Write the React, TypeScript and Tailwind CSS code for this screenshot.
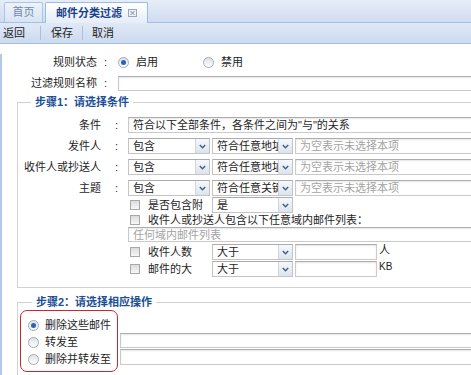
import React from "react";

function Chevron() {
  return (
    <svg width="7" height="5" viewBox="0 0 7 5">
      <path d="M0.8 1 L3.5 3.8 L6.2 1" fill="none" stroke="#3e5f8f" strokeWidth="1.4" />
    </svg>
  );
}

function CloseIcon() {
  return (
    <svg width="9" height="8" viewBox="0 0 9 8">
      <rect x="0.5" y="0.5" width="8" height="7" fill="#eef1f6" stroke="#9aa6ba" />
      <path d="M2.5 2 L6.5 6 M6.5 2 L2.5 6" stroke="#7c89a0" strokeWidth="1" />
    </svg>
  );
}

function Radio({ checked }: { checked?: boolean }) {
  return (
    <span className="w-[11px] h-[11px] shrink-0 rounded-full border border-[#a3acb8] bg-gradient-to-b from-[#dde2e8] to-white flex items-center justify-center">
      {checked && <span className="w-[5px] h-[5px] rounded-full bg-[#2a62b8]" />}
    </span>
  );
}

function Check() {
  return (
    <span className="w-[10px] h-[10px] shrink-0 border border-[#a9a9a9] bg-gradient-to-b from-[#dcdcdc] to-[#f7f7f7]" />
  );
}

function Select({ value, className }: { value: string; className: string }) {
  return (
    <div className={`flex h-full shrink-0 border border-[#c4c4c4] border-t-[#ababab] bg-white ${className}`}>
      <div className="flex-1 min-w-0 overflow-hidden whitespace-nowrap pl-[4px] leading-[14px]">{value}</div>
      <div className="w-[14px] shrink-0 border-l border-[#cfd6de] bg-gradient-to-b from-[#f6f8fb] to-[#dde4ec] flex items-center justify-center">
        <Chevron />
      </div>
    </div>
  );
}

function Box({ children, className = "" }: { children?: React.ReactNode; className?: string }) {
  return (
    <div
      className={`h-full border border-[#cacaca] border-t-[#adadad] bg-white shadow-[inset_0_1px_2px_rgba(0,0,0,0.10)] pl-[4px] leading-[14px] overflow-hidden whitespace-nowrap ${className}`}
    >
      {children}
    </div>
  );
}

function FLabel({ text }: { text: string }) {
  return (
    <>
      <div className="w-[83px] shrink-0 text-right whitespace-nowrap">{text}</div>
      <div className="w-[27px] shrink-0 pl-[14px]">:</div>
    </>
  );
}

function CondRow({ label, mid }: { label: string; mid: string }) {
  return (
    <div className="flex items-center h-[16px]">
      <FLabel text={label} />
      <Select value="包含" className="w-[82px]" />
      <Select value={mid} className="w-[81px] ml-[2px]" />
      <Box className="flex-1 ml-[2px] text-[#a3a3a3]">为空表示未选择本项</Box>
    </div>
  );
}

export default function App() {
  return (
    <div className="w-[471px] h-[375px] overflow-hidden bg-white text-[11px] text-[#1e1e1e] font-['Liberation_Sans','Noto_Sans_CJK_SC',sans-serif]">
      {/* tab strip */}
      <div className="h-[23px] flex items-end gap-[2px] pl-[4px] bg-gradient-to-b from-[#e6edf8] to-[#cfdcf0] border-b border-[#a3bfe6]">
        <div className="h-[20px] w-[39px] flex items-center justify-center border border-b-0 border-[#adc4e4] rounded-t-[2px] bg-gradient-to-b from-[#eef3fa] to-[#d8e3f3] text-[#7089b0]">
          首页
        </div>
        <div className="h-[21px] w-[103px] flex items-center pl-[10px] gap-[6px] border border-b-0 border-[#99bbe8] rounded-t-[2px] bg-gradient-to-b from-white to-[#e6edf8] font-bold text-[#15428b] -mb-px">
          邮件分类过滤
          <CloseIcon />
        </div>
      </div>

      {/* toolbar */}
      <div className="h-[21px] flex items-center bg-gradient-to-b from-[#e1e9f6] to-[#cbdaef] border-b border-[#a3bfe6] text-[#222]">
        <span className="pl-[3px]">返回</span>
        <span className="ml-[15px] w-px h-[14px] bg-[#a9bfdc]" />
        <span className="ml-[10px]">保存</span>
        <span className="ml-[9px] w-px h-[14px] bg-[#a9bfdc]" />
        <span className="ml-[9px]">取消</span>
      </div>

      {/* content */}
      <div className="w-[640px] h-[331px] border-l-2 border-[#b3c9e8]">
        <div className="flex items-center h-[16px] mt-[10px]">
          <div className="w-[95px] shrink-0 text-right">规则状态</div>
          <div className="w-[21px] shrink-0 pl-[7px]">:</div>
          <div className="w-[85px] flex items-center gap-[7px]">
            <Radio checked />
            <span>启用</span>
          </div>
          <div className="flex items-center gap-[7px]">
            <Radio />
            <span>禁用</span>
          </div>
        </div>

        <div className="flex items-center h-[15px] mt-[6px]">
          <div className="w-[95px] shrink-0 text-right">过滤规则名称</div>
          <div className="w-[21px] shrink-0 pl-[7px]">:</div>
          <Box className="flex-1" />
        </div>

        {/* step 1 */}
        <fieldset className="ml-[15px] mt-[3px] border border-[#d2d2d2] px-0 pt-[7px] pb-[10px]">
          <legend className="ml-[13px] px-[4px] leading-[16px] font-bold text-[#1b4f95]">步骤1：请选择条件</legend>
          <div className="flex flex-col gap-[5px]">
            <div className="flex items-center h-[16px]">
              <FLabel text="条件" />
              <Box className="flex-1">符合以下全部条件，各条件之间为"与"的关系</Box>
            </div>
            <CondRow label="发件人" mid="符合任意地址" />
            <CondRow label="收件人或抄送人" mid="符合任意地址" />
            <CondRow label="主题" mid="符合任意关键字" />
          </div>

          <div className="flex items-center h-[16px] mt-[1px]">
            <div className="w-[110px] shrink-0" />
            <div className="w-[84px] shrink-0 flex items-center gap-[8px] pl-[2px]">
              <Check />
              <span>是否包含附</span>
            </div>
            <Select value="是" className="w-[81px]" />
          </div>

          <div className="flex items-center h-[14px]">
            <div className="w-[110px] shrink-0" />
            <div className="flex items-center gap-[8px] pl-[2px]">
              <Check />
              <span>收件人或抄送人包含以下任意域内邮件列表：</span>
            </div>
          </div>

          <div className="flex items-center h-[15px]">
            <div className="w-[110px] shrink-0" />
            <Box className="flex-1 text-[#a3a3a3] pl-[2px]">任何域内邮件列表</Box>
          </div>

          <div className="flex items-center h-[16px] mt-[2px]">
            <div className="w-[110px] shrink-0" />
            <div className="w-[84px] shrink-0 flex items-center gap-[8px] pl-[2px]">
              <Check />
              <span>收件人数</span>
            </div>
            <Select value="大于" className="w-[81px]" />
            <Box className="w-[82px] ml-[2px]" />
            <span className="ml-[2px] self-start leading-[12px]">人</span>
          </div>

          <div className="flex items-center h-[16px] mt-[1px]">
            <div className="w-[110px] shrink-0" />
            <div className="w-[84px] shrink-0 flex items-center gap-[8px] pl-[2px]">
              <Check />
              <span>邮件的大</span>
            </div>
            <Select value="大于" className="w-[81px]" />
            <Box className="w-[82px] ml-[2px]" />
            <span className="ml-[2px] self-start leading-[12px] text-[10px]">KB</span>
          </div>
        </fieldset>

        {/* step 2 */}
        <fieldset className="ml-[15px] mt-[6px] border border-[#d2d2d2] px-0 pt-0 pb-[10px]">
          <legend className="ml-[14px] px-[4px] leading-[16px] font-bold text-[#1b4f95]">步骤2：请选择相应操作</legend>
          <div className="flex">
            <div className="ml-[2px] w-[98px] shrink-0 rounded-[7px] border-[1.5px] border-[#c9262f] pl-[7px] pt-[6px] pb-[4px] flex flex-col gap-[1px]">
              <div className="flex items-center gap-[6px] h-[16px]">
                <Radio checked />
                <span>删除这些邮件</span>
              </div>
              <div className="flex items-center gap-[6px] h-[16px]">
                <Radio />
                <span>转发至</span>
              </div>
              <div className="flex items-center gap-[6px] h-[16px]">
                <Radio />
                <span>删除并转发至</span>
              </div>
            </div>
            <div className="flex-1 ml-[2px] pt-[23px] flex flex-col gap-[1px]">
              <div className="h-[15px]">
                <Box />
              </div>
              <div className="h-[16px]">
                <Box />
              </div>
            </div>
          </div>
        </fieldset>
      </div>
    </div>
  );
}
